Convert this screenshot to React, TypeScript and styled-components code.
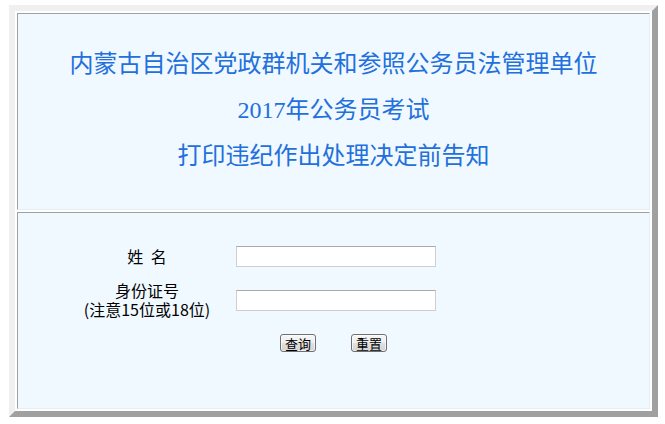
import React from "react";
import styled, { createGlobalStyle } from "styled-components";

const GlobalStyle = createGlobalStyle`
  html, body { margin: 0; padding: 0; background: #ffffff; }
  body { font-family: "Noto Sans CJK SC", "Noto Sans", sans-serif; }
`;

const Page = styled.div`
  padding: 5px 7px 7px 9px;
`;

const OuterTable = styled.div`
  box-sizing: border-box;
  width: 649px;
  height: 412px;
  border: 6px solid;
  border-color: #f0f0f0 #a0a0a0 #a0a0a0 #f0f0f0;
  background: #ffffff;
  padding: 2px;
  display: flex;
  flex-direction: column;
  gap: 2px;
`;

const Cell = styled.div`
  box-sizing: border-box;
  height: 197px;
  border: 1px solid;
  border-color: #a0a0a0 #e6eef2 #e6eef2 #a0a0a0;
  background: #f0f9ff;
`;

const TitleCell = styled(Cell)`
  display: flex;
  flex-direction: column;
  justify-content: center;
  align-items: center;
  padding-bottom: 3px;
`;

const TitleLine = styled.div`
  font-family: "Liberation Serif", "Noto Sans CJK SC", serif;
  font-size: 24px;
  line-height: 46px;
  color: #2370dc;
  white-space: nowrap;
`;

const FormCell = styled(Cell)`
  padding: 33px 0 0 64px;
`;

const FormGrid = styled.div`
  display: grid;
  grid-template-columns: 130px 200px;
  column-gap: 24px;
  row-gap: 14px;
  align-items: center;
`;

const Label = styled.div<{ $spaced?: boolean }>`
  text-align: center;
  font-family: "Noto Sans CJK SC", sans-serif;
  font-size: 16px;
  line-height: 19px;
  color: #000;
  word-spacing: ${(p) => (p.$spaced ? "4px" : "normal")};
  white-space: nowrap;
`;

const Note = styled.span`
  display: block;
`;

const TextInput = styled.input`
  box-sizing: border-box;
  width: 200px;
  height: 21px;
  margin: 0;
  border: 1px solid #cfcfcf;
  border-top-color: #a9a9a9;
  background: #ffffff;
  outline: none;
`;

const ButtonRow = styled.div`
  display: flex;
  justify-content: center;
  gap: 35px;
  margin: 15px 0 0 -64px;
`;

const Button = styled.button`
  box-sizing: border-box;
  height: 18px;
  padding: 0 4px;
  margin: 0;
  border: 1px solid #707070;
  border-radius: 3px;
  background: linear-gradient(#f6f6f6 0%, #eeeeee 50%, #e0e0e0 51%, #d4d4d4 100%);
  box-shadow: inset 0 0 0 1px rgba(255, 255, 255, 0.6);
  font-family: "Noto Sans CJK SC", sans-serif;
  font-size: 13px;
  line-height: 15px;
  color: #000;
`;

export default function App() {
  return (
    <>
      <GlobalStyle />
      <Page>
        <OuterTable>
          <TitleCell>
            <TitleLine>内蒙古自治区党政群机关和参照公务员法管理单位</TitleLine>
            <TitleLine>2017年公务员考试</TitleLine>
            <TitleLine>打印违纪作出处理决定前告知</TitleLine>
          </TitleCell>
          <FormCell>
            <FormGrid>
              <Label $spaced>姓 名</Label>
              <TextInput type="text" />
              <Label>
                身份证号
                <Note>(注意15位或18位)</Note>
              </Label>
              <TextInput type="text" />
            </FormGrid>
            <ButtonRow>
              <Button type="button">查询</Button>
              <Button type="button">重置</Button>
            </ButtonRow>
          </FormCell>
        </OuterTable>
      </Page>
    </>
  );
}
